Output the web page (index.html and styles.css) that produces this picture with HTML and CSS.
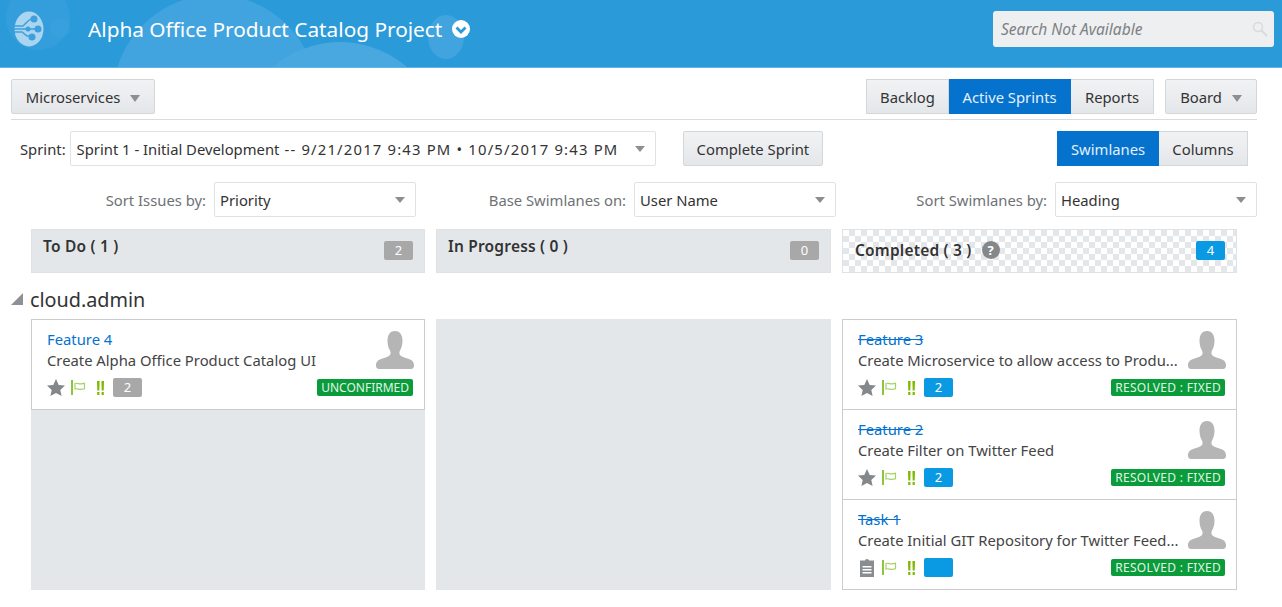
FILE: index.html
```html
<!DOCTYPE html>
<html lang="en">
<head>
    <meta charset="UTF-8">
    <title>Alpha Office Product Catalog Project</title>
    <link rel="stylesheet" href="styles.css">
</head>
<body>

    <svg width="0" height="0" class="defs">
        <symbol id="avatar" viewBox="0 0 38 38">
            <path d="M19 0C24.500 0 26.500 4.500 26.500 10C26.500 13.500 25.500 17 24 19.500C23 21.300 23.200 23.500 24.800 24.700C26.600 26 30 26.700 33 28C36 29.200 38 30.800 38 34.500C38 36.700 37 38 35 38H3C1 38 0 36.700 0 34.500C0 30.800 2 29.200 5 28C8 26.700 11.400 26 13.200 24.700C14.800 23.500 15 21.300 14 19.500C12.500 17 11.500 13.500 11.500 10C11.500 4.500 13.500 0 19 0z"/>
        </symbol>
        <symbol id="star" viewBox="0 0 18 17">
            <path d="M9 0l2.700 5.900 6.300.7-4.700 4.300 1.300 6.100L9 14l-5.600 3 1.300-6.100L0 6.600l6.300-.7z"/>
        </symbol>
        <symbol id="flag" viewBox="0 0 15 15">
            <rect x="0" y="0" width="2" height="15" fill="#8cc63f"/>
            <path d="M4 3.500c2.500-1 4 .8 6 .4l3.500-.6v5.500l-3.500.6c-2 .4-3.500-1.400-6-.4z" fill="none" stroke="#a5d364" stroke-width="1.200"/>
        </symbol>
        <symbol id="prio" viewBox="0 0 7 14">
            <path d="M0 0h2.600l-.3 9.500h-2zM4.400 0H7l-.3 9.500h-2zM.2 11h2.200v3H.2zM4.600 11h2.200v3H4.600z" fill="#7fb800"/>
        </symbol>
        <symbol id="task" viewBox="0 0 14 18">
            <path d="M5 1.500a2 1.500 0 0 1 4 0h5V18H0V1.500z" fill="#8a8d90"/>
            <path d="M2.500 7h9v1.400h-9zM2.500 10h9v1.400h-9zM2.500 13h9v1.400h-9z" fill="#fff"/>
        </symbol>
    </svg>

    <header class="top-bar">
        <svg class="top-bar-art" width="1282" height="67" viewBox="0 0 1282 67">
            <circle cx="38" cy="18" r="32" fill="#3aa2de" opacity=".6"/>
            <circle cx="60" cy="28" r="10" fill="#3aa2de" opacity=".6"/>
            <circle cx="215" cy="97" r="102" fill="#42a4de"/>
            <circle cx="340" cy="144" r="102" fill="#4aa8e0"/>
            <ellipse cx="446" cy="37" rx="18" ry="22" fill="#42a4de"/>
        </svg>
        <div class="brand">
            <svg class="logo" width="30" height="36" viewBox="0 0 30 36">
                <ellipse cx="15" cy="18" rx="14.500" ry="17.500" fill="#a9d5f1"/>
                <g fill="none" stroke="#3f9fdc" stroke-width="1.500">
                    <path d="M0 15h9l5-5 6-4M0 18h26M0 21h8l5 4h3"/>
                </g>
                <g fill="#3f9fdc">
                    <circle cx="20" cy="8" r="3.500"/>
                    <circle cx="24" cy="18" r="3.500"/>
                    <circle cx="14" cy="18" r="2.500"/>
                    <circle cx="18" cy="26" r="3.500"/>
                </g>
            </svg>
            <h1 class="project-name">Alpha Office Product Catalog Project</h1>
            <svg class="project-caret" width="18" height="18" viewBox="0 0 18 18">
                <circle cx="9" cy="9" r="9" fill="#fff"/>
                <path d="M4.500 7.500L9 12l4.500-4.500" fill="none" stroke="#2b9ad9" stroke-width="2.800"/>
            </svg>
        </div>
        <div class="search">
            <span>Search Not Available</span>
            <svg width="16" height="16" viewBox="0 0 16 16">
                <circle cx="6" cy="6" r="4.500" fill="none" stroke="#d8dadc" stroke-width="1.500"/>
                <path d="M9.500 9.500L15 15" stroke="#d8dadc" stroke-width="2"/>
            </svg>
        </div>
    </header>

    <main class="page">
        <div class="toolbar">
            <button class="btn btn-menu">Microservices <i class="caret"></i></button>
            <div class="toolbar-right">
                <div class="btn-group">
                    <button class="btn btn-backlog">Backlog</button>
                    <button class="btn active btn-active-sprints">Active Sprints</button>
                    <button class="btn btn-reports">Reports</button>
                </div>
                <button class="btn btn-board">Board <i class="caret"></i></button>
            </div>
        </div>

        <div class="sprint-row">
            <label class="sprint-label">Sprint:</label>
            <div class="select select-sprint"><span>Sprint 1 - Initial Development<span class="sprint-dates"> -- 9/21/2017 9:43 PM • 10/5/2017 9:43 PM</span></span> <i class="caret"></i></div>
            <button class="btn btn-complete">Complete Sprint</button>
            <div class="btn-group view-switch">
                <button class="btn active btn-swimlanes">Swimlanes</button>
                <button class="btn btn-columns">Columns</button>
            </div>
        </div>

        <div class="sort-row">
            <div class="sort sort-issues">
                <label>Sort Issues by:</label>
                <div class="select">Priority <i class="caret"></i></div>
            </div>
            <div class="sort sort-base">
                <label>Base Swimlanes on:</label>
                <div class="select">User Name <i class="caret"></i></div>
            </div>
            <div class="sort sort-lanes">
                <label>Sort Swimlanes by:</label>
                <div class="select">Heading <i class="caret"></i></div>
            </div>
        </div>

        <div class="columns">
            <div class="col-head">
                <strong>To Do ( 1 )</strong>
                <span class="count">2</span>
            </div>
            <div class="col-head">
                <strong>In Progress ( 0 )</strong>
                <span class="count">0</span>
            </div>
            <div class="col-head col-done">
                <strong>Completed ( 3 )</strong>
                <span class="help">?</span>
                <span class="count count-blue">4</span>
            </div>
        </div>

        <div class="lane-title"><i class="lane-arrow"></i>cloud.admin</div>

        <div class="columns lanes">
            <div class="lane">
                <article class="card">
                    <div class="card-text">
                        <a class="card-key">Feature 4</a>
                        <p>Create Alpha Office Product Catalog UI</p>
                    </div>
                    <svg class="avatar"><use href="#avatar"/></svg>
                    <div class="card-meta">
                        <svg class="ico-star"><use href="#star"/></svg>
                        <svg class="ico-flag"><use href="#flag"/></svg>
                        <svg class="ico-prio"><use href="#prio"/></svg>
                        <span class="count points">2</span>
                        <span class="status status-new">UNCONFIRMED</span>
                    </div>
                </article>
            </div>
            <div class="lane"></div>
            <div class="lane">
                <article class="card">
                    <div class="card-text">
                        <a class="card-key done">Feature 3</a>
                        <p>Create Microservice to allow access to Produ...</p>
                    </div>
                    <svg class="avatar"><use href="#avatar"/></svg>
                    <div class="card-meta">
                        <svg class="ico-star"><use href="#star"/></svg>
                        <svg class="ico-flag"><use href="#flag"/></svg>
                        <svg class="ico-prio"><use href="#prio"/></svg>
                        <span class="count count-blue points">2</span>
                        <span class="status">RESOLVED : FIXED</span>
                    </div>
                </article>
                <article class="card">
                    <div class="card-text">
                        <a class="card-key done">Feature 2</a>
                        <p>Create Filter on Twitter Feed</p>
                    </div>
                    <svg class="avatar"><use href="#avatar"/></svg>
                    <div class="card-meta">
                        <svg class="ico-star"><use href="#star"/></svg>
                        <svg class="ico-flag"><use href="#flag"/></svg>
                        <svg class="ico-prio"><use href="#prio"/></svg>
                        <span class="count count-blue points">2</span>
                        <span class="status">RESOLVED : FIXED</span>
                    </div>
                </article>
                <article class="card">
                    <div class="card-text">
                        <a class="card-key done">Task 1</a>
                        <p>Create Initial GIT Repository for Twitter Feed...</p>
                    </div>
                    <svg class="avatar"><use href="#avatar"/></svg>
                    <div class="card-meta">
                        <svg class="ico-task"><use href="#task"/></svg>
                        <svg class="ico-flag"><use href="#flag"/></svg>
                        <svg class="ico-prio"><use href="#prio"/></svg>
                        <span class="count count-blue points"></span>
                        <span class="status">RESOLVED : FIXED</span>
                    </div>
                </article>
            </div>
        </div>
    </main>

</body>
</html>
```

FILE: styles.css
```css
html, body {
    height: 100%;
    overflow: hidden;
}
body {
    margin: 0;
    background-color: #fff;
    color: #333;
    font-family: "Noto Sans", sans-serif;
    font-size: 14.8px;
}
.defs {
    display: none;
}

/* top bar */
.top-bar {
    position: relative;
    display: flex;
    align-items: center;
    justify-content: space-between;
    height: 68px;
    padding: 0 8px 10px 14px;
    box-sizing: border-box;
    background-color: #2b9ad9;
    border-bottom: 1px solid #63b4e6;
    overflow: hidden;
}
.top-bar-art {
    position: absolute;
    top: 0;
    left: 0;
}
.brand {
    position: relative;
    display: flex;
    align-items: center;
}
.logo {
    margin-right: 44px;
}
.project-name {
    margin: 0;
    color: #fff;
    font-size: 20.8px;
    font-weight: 400;
}
.project-caret {
    margin-left: 10px;
}
.search {
    position: relative;
    display: flex;
    align-items: center;
    justify-content: space-between;
    width: 281px;
    height: 36px;
    padding: 0 6px 0 8px;
    box-sizing: border-box;
    background-color: #eeeff1;
    border-radius: 3px;
    color: #7d8184;
    font-size: 15.500px;
    font-style: italic;
}

/* buttons */
.btn {
    height: 35px;
    padding: 0 13px;
    background: linear-gradient(#f1f2f4, #e4e7ea);
    border: 1px solid #d3d7da;
    border-radius: 2px;
    color: #333;
    font-family: inherit;
    font-size: 14.8px;
    white-space: nowrap;
}
.btn.active {
    background: #0572ce;
    border-color: #0572ce;
    color: #e3f0fa;
}
.caret {
    display: inline-block;
    width: 0;
    height: 0;
    margin-left: 6px;
    border-top: 7px solid #8c8f92;
    border-left: 5px solid transparent;
    border-right: 5px solid transparent;
    vertical-align: 1px;
}
.btn-group {
    display: flex;
}
.btn-group .btn {
    border-radius: 0;
}
.btn-group .btn + .btn {
    border-left: none;
}

/* toolbar */
.page {
    padding: 11px 25px 0 11px;
}
.toolbar {
    display: flex;
    justify-content: space-between;
    height: 35px;
    padding-bottom: 5px;
    border-bottom: 1px solid #d9dbdd;
}
.btn-menu {
    width: 144px;
}
.toolbar-right {
    display: flex;
    gap: 11px;
}
.btn-backlog {
    width: 83px;
}
.btn-active-sprints {
    width: 122px;
}
.btn-reports {
    width: 83px;
}
.btn-board {
    width: 92px;
}

/* sprint row */
.sprint-row {
    display: flex;
    align-items: center;
    height: 35px;
    margin-top: 11px;
    padding-left: 9px;
}
.sprint-label {
    margin-right: 4px;
}
.sprint-dates {
    letter-spacing: 1.200px;
}
.select {
    display: flex;
    align-items: center;
    justify-content: space-between;
    height: 35px;
    padding: 0 6px 0 5px;
    box-sizing: border-box;
    background-color: #fff;
    border: 1px solid #dfe3e6;
    border-radius: 2px;
    white-space: nowrap;
}
.select .caret {
    margin-right: 4px;
    border-top-width: 6px;
}
.select-sprint {
    width: 586px;
    padding-left: 6px;
}
.btn-complete {
    width: 140px;
    margin-left: 27px;
}
.view-switch {
    margin-left: auto;
    margin-right: 9px;
}
.btn-swimlanes {
    width: 102px;
}
.btn-columns {
    width: 89px;
}

/* sort row */
.sort-row {
    display: flex;
    height: 35px;
    margin-top: 16px;
}
.sort {
    display: flex;
    align-items: center;
    justify-content: flex-end;
}
.sort label {
    margin-right: 8px;
    color: #6e7276;
}
.sort .select {
    width: 202px;
}
.sort-issues {
    width: 405px;
}
.sort-base {
    width: 420px;
}
.sort-lanes {
    width: 421px;
}

/* columns */
.columns {
    display: grid;
    grid-template-columns: 394px 395px 395px;
    gap: 11px;
    margin-top: 12px;
    margin-left: 20px;
}
.col-head {
    display: flex;
    align-items: flex-start;
    height: 44px;
    padding: 5px 11px 0 11px;
    box-sizing: border-box;
    background-color: #e4e7ea;
    border: 1px solid #dfe3e6;
    color: #333;
    font-size: 15.500px;
}
.col-head strong {
    font-weight: 600;
    letter-spacing: .2px;
}
.col-head .count {
    margin-top: 6px;
    margin-left: auto;
}
.col-done {
    align-items: center;
    padding: 0 11px 2px 12px;
    background-color: #fff;
    background-image: conic-gradient(#e4e7ea 25%, #fff 25% 50%, #e4e7ea 50% 75%, #fff 75%);
    background-size: 12px 12px;
}
.col-done .count {
    margin-top: 0;
}
.help {
    width: 18px;
    height: 18px;
    margin-left: 10px;
    background-color: #85888b;
    border-radius: 50%;
    color: #fff;
    font-size: 13px;
    font-weight: 700;
    line-height: 18px;
    text-align: center;
}
.count {
    display: inline-block;
    width: 29px;
    height: 19px;
    background-color: #a8a8a8;
    border-radius: 2px;
    color: #fff;
    font-size: 13px;
    font-weight: 400;
    line-height: 19px;
    text-align: center;
}
.count-blue {
    background-color: #0a9ae3;
}

/* swimlane */
.lane-title {
    display: flex;
    align-items: center;
    height: 24px;
    margin-top: 14px;
    color: #333;
    font-size: 19.800px;
}
.lane-arrow {
    width: 0;
    height: 0;
    margin-right: 7px;
    border-bottom: 12px solid #8e9194;
    border-left: 12px solid transparent;
}
.lanes {
    margin-top: 8px;
}
.lane {
    height: 271px;
    background-color: #e4e7ea;
}

/* cards */
.card {
    display: grid;
    grid-template-columns: 1fr 38px;
    height: 91px;
    padding: 10px 10px 0 15px;
    box-sizing: border-box;
    background-color: #fff;
    border: 1px solid #ccc;
}
.card + .card {
    border-top: none;
    height: 90px;
}
.card-text {
    min-width: 0;
}
.card-key {
    display: block;
    color: #0572ce;
    line-height: 19px;
}
.card-key.done {
    text-decoration: line-through;
}
.card p {
    margin: 2px 0 0;
    color: #444;
    line-height: 19px;
    white-space: nowrap;
}
.avatar {
    width: 38px;
    height: 38px;
    margin-top: 1px;
    fill: #b5b5b5;
}
.card-meta {
    grid-column: 1 / 3;
    display: flex;
    align-items: center;
    height: 19px;
    margin-top: -4px;
}
.ico-star {
    width: 18px;
    height: 17px;
    fill: #85888b;
}
.ico-task {
    width: 14px;
    height: 18px;
    margin: 0 2px;
}
.ico-flag {
    width: 15px;
    height: 15px;
    margin-left: 6px;
}
.ico-prio {
    width: 7px;
    height: 14px;
    margin-left: 11px;
}
.points {
    margin-left: 9px;
}
.status {
    margin-left: auto;
    margin-right: 1px;
    padding: 0 4px;
    background-color: #0a9b3a;
    border-radius: 2px;
    color: #e4f5e9;
    font-size: 12px;
    letter-spacing: .3px;
    line-height: 17px;
}
.status-new {
    letter-spacing: 0;
}
```
